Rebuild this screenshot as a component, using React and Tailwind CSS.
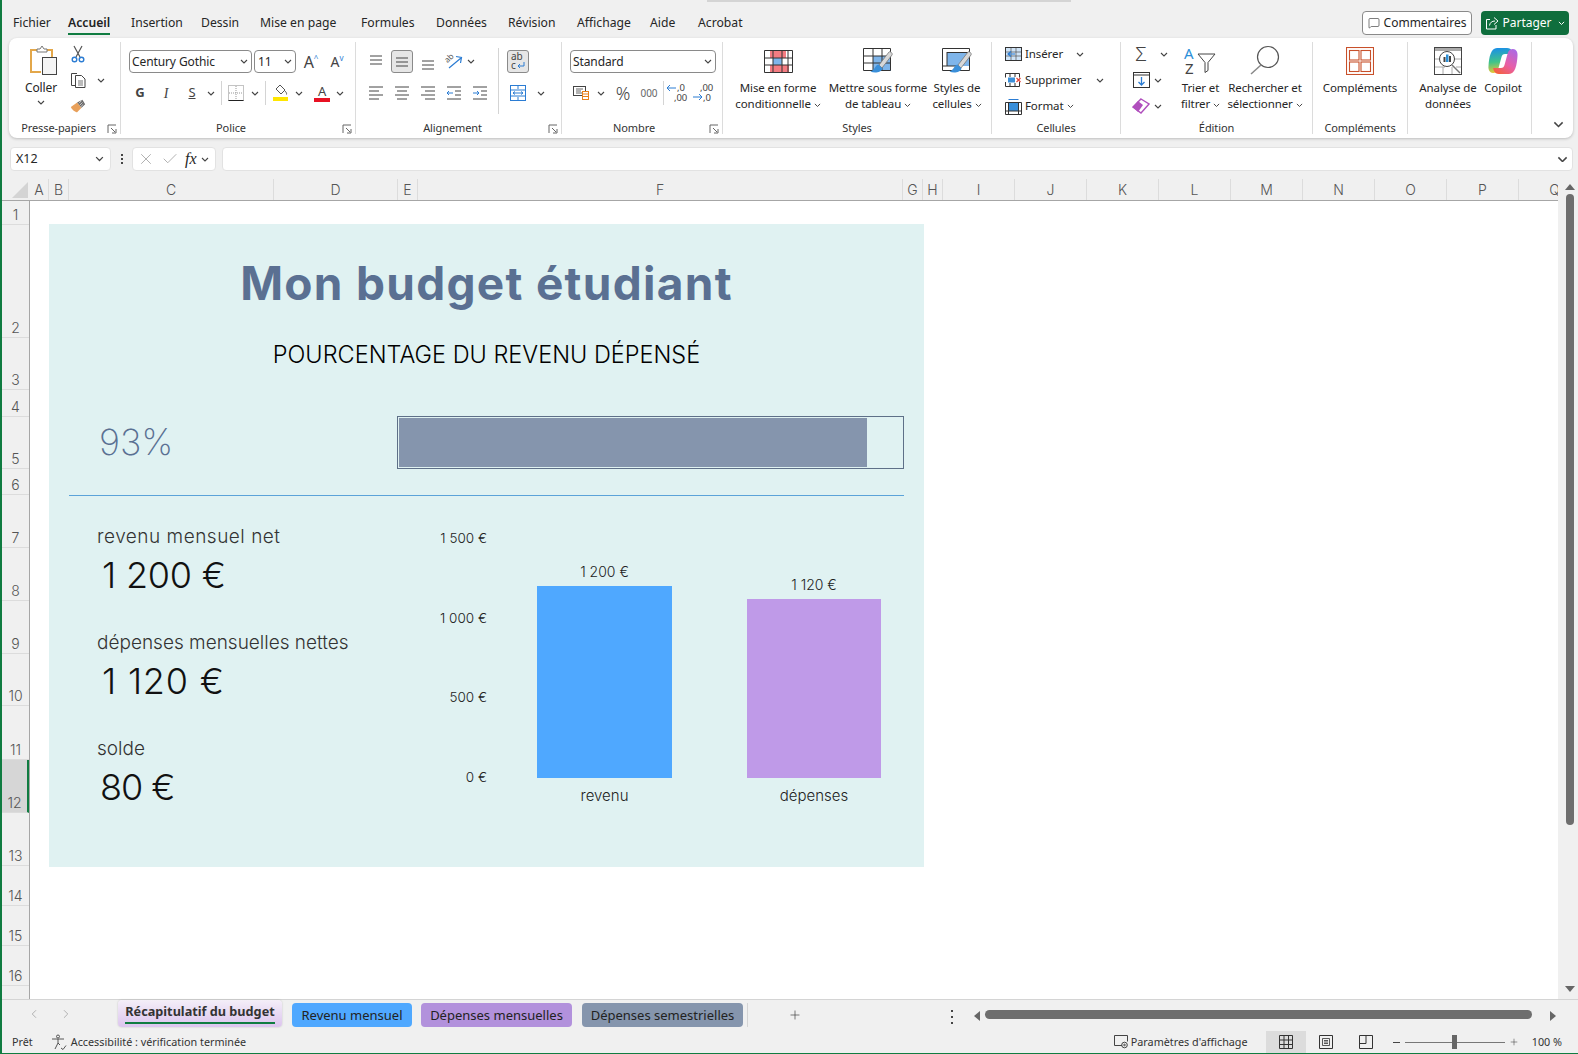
import React from 'react';
import { MessageSquare, Check, X, Plus, ChevronLeft, ChevronRight } from 'lucide-react';

const Chev = ({ className = '', s = 8, color = '#444' }) => (
    <svg width={s} height={s * 0.625} viewBox="0 0 8 5" className={`inline-block shrink-0 ${className}`}>
        <path d="M1 1l3 3 3-3" fill="none" stroke={color} strokeWidth="1.1" />
    </svg>
);

const Launcher = () => (
    <svg width="10" height="10" viewBox="0 0 10 10" className="absolute right-[3px] top-[82px]">
        <path d="M1 9V1h8M5 9h4V5M4 4l4 4" fill="none" stroke="#666" strokeWidth="1" />
    </svg>
);

const Cell = ({ w, children, className = '' }) => (
    <span className={`flex h-full shrink-0 items-center justify-center ${w} ${className}`}>{children}</span>
);

const Group = ({ w, label, labelClass = '', launcher, children, className = '' }) => (
    <div className={`relative my-[4px] flex shrink-0 flex-col border-r border-[#dcdcdc] ${w}`}>
        <div className={`h-[76px] shrink-0 ${className}`}>{children}</div>
        <div className={`h-[20px] shrink-0 text-center text-[11px] leading-[20px] text-[#333] ${labelClass}`}>{label}</div>
        {launcher && <Launcher />}
    </div>
);

// ---- ribbon drawings ----
const PasteIcon = () => (
    <svg width="30" height="31" viewBox="0 0 30 31" className="ml-[6px]">
        <path d="M8 5H2v22h10" fill="none" stroke="#e3a74a" strokeWidth="2" />
        <path d="M18 5h5v7" fill="none" stroke="#e3a74a" strokeWidth="2" />
        <path d="M8 6V4h3l2-3 2 3h3v3H8z" fill="#fff" stroke="#777" strokeWidth="1" />
        <rect x="13.5" y="12.5" width="14" height="17" fill="#f5f5f5" stroke="#444" />
    </svg>
);
const Scissors = () => (
    <svg width="14" height="18" viewBox="0 0 14 18">
        <path d="M3 1l6 11M11 1L5 12" stroke="#555" strokeWidth="1.2" fill="none" />
        <circle cx="3.5" cy="14.5" r="2.3" fill="none" stroke="#2b7cd3" strokeWidth="1.4" />
        <circle cx="10.5" cy="14.5" r="2.3" fill="none" stroke="#2b7cd3" strokeWidth="1.4" />
    </svg>
);
const CopyIcon = () => (
    <svg width="18" height="18" viewBox="0 0 18 18">
        <path d="M7 2.5H1.5v12H5" fill="none" stroke="#444" />
        <path d="M5.5 4.5h6l3.5 3.500V16.500h-9.500z" fill="#fff" stroke="#444" />
        <path d="M8 10h5M8 12h5M8 14h5" stroke="#777" />
    </svg>
);
const BrushIcon = () => (
    <svg width="18" height="16" viewBox="0 0 18 16">
        <path d="M1 9l7-5 5 6-5 5c-2 0-6-3-7-6z" fill="#e8a05a" />
        <path d="M8 4l5 6 4-4-3-5z" fill="#666" />
        <path d="M10 5l3-3M11 7l3-3M12 9l3-3" stroke="#fff" strokeWidth=".8" />
    </svg>
);
const BordersIcon = () => (
    <svg width="16" height="16" viewBox="0 0 16 16">
        <rect x=".5" y=".5" width="15" height="15" fill="none" stroke="#888" strokeDasharray="1 1" />
        <path d="M8 1v14M1 8h14" stroke="#999" strokeDasharray="1 1" />
        <path d="M.5 15.500h15" stroke="#222" />
    </svg>
);
const FillIcon = () => (
    <svg width="17" height="18" viewBox="0 0 17 18">
        <path d="M8 1l5 5-4 4-5-5z" fill="none" stroke="#555" />
        <path d="M13 7c1 1 2 2.500 1.500 3.500" fill="none" stroke="#555" />
        <rect x="1" y="13" width="15" height="4" fill="#ffe600" />
    </svg>
);
const Lines = ({ rows }) => (
    <svg width="16" height="16" viewBox="0 0 16 16">
        {rows.map(([x1, x2, y], i) => <path key={i} d={`M${x1} ${y}H${x2}`} stroke="#444" />)}
    </svg>
);
const OrientIcon = () => (
    <svg width="20" height="17" viewBox="0 0 20 17" className="overflow-visible">
        <text x="1" y="8" fontSize="8" fontFamily="Noto Sans" fill="#555" transform="rotate(-45 5 6)">ab</text>
        <path d="M5 15L17 5M12 3.500l5.500 1-1 5.500" stroke="#2b7cd3" strokeWidth="1.200" fill="none" />
    </svg>
);
const IndentIcon = ({ flip }) => (
    <svg width="16" height="14" viewBox="0 0 16 14">
        <path d="M1 1h14M9 5h6M9 9h6M1 13h14" stroke="#444" />
        <path d={flip ? 'M1 7h6M5 5l2 2-2 2' : 'M1 7h6M3 5L1 7l2 2'} stroke="#2b7cd3" fill="none" />
    </svg>
);
const MergeIcon = () => (
    <svg width="16" height="16" viewBox="0 0 16 16">
        <rect x=".5" y=".5" width="15" height="15" fill="#fff" stroke="#2b7cd3" />
        <path d="M1 5h14M1 11h14M8 1v3M8 12v3" stroke="#2b7cd3" />
        <path d="M3 8h10M5 6.500L3 8l2 1.500M11 6.500L13 8l-2 1.500" stroke="#2b7cd3" fill="none" />
    </svg>
);
const WrapIcon = () => (
    <svg width="20" height="21" viewBox="0 0 20 21" className="overflow-visible">
        <text x="3" y="9" fontSize="10" fontFamily="Noto Sans" fill="#444">ab</text>
        <text x="3" y="18" fontSize="10" fontFamily="Noto Sans" fill="#444">c</text>
        <path d="M16 11v4h-6M12 13l-2 2 2 2" fill="none" stroke="#2b7cd3" />
    </svg>
);
const DecimalIcon = ({ more }) => (
    <svg width="22" height="20" viewBox="0 0 22 20" className="overflow-visible">
        <text x={more ? 8 : 11} y="8" fontSize="9.500" fontFamily="Noto Sans" fill="#444">{more ? ',00' : ',0'}</text>
        <text x={more ? 11 : 8} y="18" fontSize="9.500" fontFamily="Noto Sans" fill="#444">{more ? ',0' : ',00'}</text>
        {more
            ? <path d="M1 14h9M7 11l3 3-3 3" fill="none" stroke="#2b7cd3" />
            : <path d="M10 5H1M4 2L1 5l3 3" fill="none" stroke="#2b7cd3" />}
    </svg>
);
const AccountingIcon = () => (
    <svg width="18" height="16" viewBox="0 0 18 16">
        <rect x=".5" y="1.500" width="12" height="9" fill="#fff" stroke="#444" />
        <path d="M3 4h7M3 6h5M3 8h6" stroke="#666" />
        <rect x="9.500" y="6.500" width="6" height="8" fill="#fff" stroke="#e8801a" />
        <path d="M10 9h5M10 11.500h5" stroke="#e8801a" />
    </svg>
);
const CfIcon = () => (
    <svg width="29" height="23" viewBox="0 0 29 23">
        <rect x="6" y="1" width="16" height="7" fill="#f47c82" />
        <rect x="9" y="8" width="9" height="7" fill="#7fb5ea" />
        <rect x="6" y="15" width="19" height="7" fill="#f47c82" />
        <path d="M.5.500h28v22H.5zM.5 8h28M.5 15h28M9 .5v22M18 .5v22M24 .5v22" fill="none" stroke="#333" />
    </svg>
);
const Brush = () => (
    <g>
        <path d="M16 17L26 4c1-1 4 1 3 3L19 20z" fill="#d8d8d8" stroke="#777" strokeWidth=".8" />
        <path d="M15.500 16.500c-4 1-3 5-8 7 4 2 11 1 12-3z" fill="#3a8fd9" />
    </g>
);
const TableIcon = () => (
    <svg width="30" height="25" viewBox="0 0 30 25">
        <rect x="10" y="8" width="18" height="15" fill="#7fb5ea" />
        <path d="M.5.500h27v22H.5zM.5 8h27M.5 15h27M10 .5v22M19 .5v22" fill="none" stroke="#333" />
        <Brush />
    </svg>
);
const StylesIcon = () => (
    <svg width="30" height="25" viewBox="0 0 30 25">
        <rect x="5" y="4" width="23" height="14" fill="#7fb5ea" />
        <path d="M.5.500h27v22H.5zM5 4.500h23M.5 18h15M5 4v14" fill="none" stroke="#333" />
        <Brush />
    </svg>
);
const InsertIcon = () => (
    <svg width="17" height="14" viewBox="0 0 17 14">
        <rect x=".5" y=".5" width="16" height="13" fill="#cfe4f7" stroke="#333" />
        <path d="M1 5h15M1 9h15M6 1v12M11 1v12" stroke="#555" strokeWidth=".7" />
        <path d="M10 7H3M6 4.500L3 7l3 2.500" stroke="#2b7cd3" fill="none" strokeWidth="1.200" />
    </svg>
);
const DeleteIcon = () => (
    <svg width="17" height="14" viewBox="0 0 17 14">
        <path d="M.5.500h14M.5 13.500h14M.5.500v4M14.500.500v4M.5 9v4.500M14.500 9v4.500M5 1v3M10 1v3M5 10v3M10 10v3" fill="none" stroke="#333" />
        <rect x="3" y="4.500" width="7" height="5" fill="#3a8fd9" />
        <path d="M11.500 5l4 4M15.500 5l-4 4" stroke="#e0453a" strokeWidth="1.200" />
    </svg>
);
const FormatIcon = () => (
    <svg width="17" height="17" viewBox="0 0 17 17">
        <rect x="3" y="4" width="11" height="9" fill="#3a8fd9" />
        <path d="M.5 4.500h16v12H.5zM.5 13h16M3.500 4v12.500M13.500 4v12.500" fill="none" stroke="#333" />
        <path d="M3.500 1.500h10" stroke="#2b7cd3" />
    </svg>
);
const FillDown = () => (
    <svg width="17" height="16" viewBox="0 0 17 16">
        <rect x=".5" y=".5" width="16" height="15" fill="#fff" stroke="#333" />
        <path d="M1 3h15" stroke="#333" />
        <path d="M8.500 5v8M5.500 10l3 3 3-3" stroke="#2b7cd3" strokeWidth="1.300" fill="none" />
    </svg>
);
const Eraser = () => (
    <svg width="18" height="16" viewBox="0 0 18 16">
        <path d="M9 1l8 5-8 9-8-6z" fill="#fff" stroke="#b04fbd" strokeWidth="1.400" />
        <path d="M1 9l5-6 5 4-5 7z" fill="#b04fbd" />
    </svg>
);
const SortIcon = () => (
    <svg width="33" height="29" viewBox="0 0 33 29" className="overflow-visible">
        <text x="0" y="13" fontSize="15" fontFamily="Noto Sans" fill="#2b8fd8">A</text>
        <text x="1" y="28" fontSize="15" fontFamily="Noto Sans" fill="#444">Z</text>
        <path d="M14 8h17l-7 8.500v8l-3 2v-10z" fill="none" stroke="#444" />
    </svg>
);
const FindIcon = () => (
    <svg width="30" height="30" viewBox="0 0 30 30">
        <circle cx="18" cy="12" r="10.500" fill="none" stroke="#555" strokeWidth="1.200" />
        <path d="M11 20L1 29" stroke="#888" strokeWidth="1.500" />
    </svg>
);
const AddinsIcon = () => (
    <svg width="28" height="28" viewBox="0 0 28 28" fill="none" stroke="#c8502a" strokeWidth="1.100">
        <rect x=".5" y=".5" width="27" height="27" />
        <rect x="3.500" y="3.500" width="9.500" height="9.500" />
        <rect x="15" y="3.500" width="9.500" height="9.500" />
        <rect x="3.500" y="15" width="9.500" height="9.500" />
        <rect x="15" y="15" width="9.500" height="9.500" />
    </svg>
);
const AnalyzeIcon = () => (
    <svg width="28" height="28" viewBox="0 0 28 28">
        <rect x=".5" y=".5" width="27" height="27" fill="#fff" stroke="#444" />
        <rect x="1" y="1" width="26" height="3" fill="#aaa" />
        <path d="M1 12h6M1 20h10M9 20v7M18 20v7M20 12h7M22 20h5" stroke="#aaa" />
        <circle cx="13" cy="12" r="7.500" fill="#fff" stroke="#444" />
        <rect x="9.500" y="10" width="2" height="5" fill="#444" />
        <rect x="12" y="7.500" width="2.500" height="7.500" fill="#2b8fd8" />
        <rect x="15" y="9" width="2" height="6" fill="#444" />
        <path d="M18 18l8 8" stroke="#777" strokeWidth="1.500" />
    </svg>
);
const CopilotIcon = () => (
    <svg width="30" height="28" viewBox="0 0 30 28">
        <defs>
            <linearGradient id="cpa" x1="0.3" y1="0" x2="0.4" y2="1">
                <stop offset="0" stopColor="#1a8fe8" />
                <stop offset="0.55" stopColor="#3fc48a" />
                <stop offset="1" stopColor="#f2c531" />
            </linearGradient>
            <linearGradient id="cpb" x1="0.1" y1="1" x2="0.8" y2="0">
                <stop offset="0" stopColor="#a86be8" />
                <stop offset="0.55" stopColor="#e85fa8" />
                <stop offset="1" stopColor="#f5603c" />
            </linearGradient>
        </defs>
        <path id="cpshape" d="M9 1h10c2.500 0 4 1 5 3l1 3h-8c-2 0-3 1-3.500 3l-3 11c-.5 2-2 5-5 5H5c-3 0-5-3-4.500-7C1 10 3 1 9 1z" fill="url(#cpa)" />
        <path d="M9 1h10c2.500 0 4 1 5 3l1 3h-8c-2 0-3 1-3.500 3l-3 11c-.5 2-2 5-5 5H5c-3 0-5-3-4.500-7C1 10 3 1 9 1z" fill="url(#cpb)" transform="rotate(180 15 14)" />
    </svg>
);
const ShareIcon = () => (
    <svg width="14" height="14" viewBox="0 0 14 14" fill="none" stroke="#fff" strokeWidth="1">
        <path d="M5 3.500H1.500v9.500h9.500V9" />
        <path d="M4.500 9.500C5 6.500 7 5 10 5M9 1.500L13 5 9 8.500" />
    </svg>
);
const GridView = () => (
    <svg width="14" height="14" viewBox="0 0 14 14" fill="none" stroke="#333">
        <path d="M.5.500h13v13H.5zM5 .5v13M9.500.5v13M.5 5h13M.5 9.500h13" />
    </svg>
);
const PageView = () => (
    <svg width="14" height="14" viewBox="0 0 14 14" fill="none" stroke="#333">
        <path d="M.5.500h13v13H.5z" />
        <path d="M3.500 3.500h7v7h-7zM5 5.500h4M5 7h4M5 8.500h4" strokeWidth=".8" />
    </svg>
);
const BreakView = () => (
    <svg width="14" height="14" viewBox="0 0 14 14" fill="none" stroke="#333">
        <path d="M.5.500h13v13H.5zM.5 8.500h6.500V.5" />
    </svg>
);

const tabs = [
    ['Fichier', 'w-[55px]'], ['Accueil', 'w-[63px]'], ['Insertion', 'w-[70px]'], ['Dessin', 'w-[59px]'], ['Mise en page', 'w-[101px]'],
    ['Formules', 'w-[75px]'], ['Données', 'w-[72px]'], ['Révision', 'w-[69px]'], ['Affichage', 'w-[73px]'], ['Aide', 'w-[48px]'], ['Acrobat', 'w-[60px]'],
];

const columns = [
    ['A', 'w-[19px]'], ['B', 'w-[20px]'], ['C', 'w-[205px]'], ['D', 'w-[124px]'], ['E', 'w-[20px]'], ['F', 'w-[485px]'],
    ['G', 'w-[20px]'], ['H', 'w-[20px]'], ['I', 'w-[72px]'], ['J', 'w-[72px]'], ['K', 'w-[72px]'], ['L', 'w-[72px]'],
    ['M', 'w-[72px]'], ['N', 'w-[72px]'], ['O', 'w-[72px]'], ['P', 'w-[72px]'], ['Q', 'w-[72px]'],
];

const rows = [
    ['1', 'h-[24px]'], ['2', 'h-[113px]'], ['3', 'h-[52px]'], ['4', 'h-[27px]'], ['5', 'h-[52px]'], ['6', 'h-[26px]'],
    ['7', 'h-[53px]'], ['8', 'h-[53px]'], ['9', 'h-[53px]'], ['10', 'h-[52px]'], ['11', 'h-[54px]'], ['12', 'h-[53px]'],
    ['13', 'h-[53px]'], ['14', 'h-[40px]'], ['15', 'h-[40px]'], ['16', 'h-[40px]'],
];

const Ribbon = () => (
    <div className="ml-[7px] flex h-[100px] w-[1564px] rounded-lg bg-white text-[11.500px] tracking-[-0.1px] shadow-[0_1px_3px_rgba(0,0,0,0.22)]">
        <Group w="w-[112px]" label="Presse-papiers" labelClass="pr-[12px]" launcher className="flex">
            <div className="ml-[3px] flex w-[58px] flex-col items-center pt-[3px]">
                <PasteIcon />
                <span className="mt-[3px] text-[12px] leading-[18px]">Coller</span>
                <Chev className="mt-[3px]" />
            </div>
            <div className="flex flex-col gap-[2px]">
                <div className="flex h-[24px] items-center"><Cell w="w-[16px]"><Scissors /></Cell></div>
                <div className="flex h-[24px] items-center"><Cell w="w-[18px]"><CopyIcon /></Cell><Chev className="ml-[9px]" /></div>
                <div className="flex h-[24px] items-center"><Cell w="w-[16px]"><BrushIcon /></Cell></div>
            </div>
        </Group>

        <Group w="w-[235px]" label="Police" labelClass="pr-[14px]" launcher className="flex flex-col gap-[8px] pt-[8px]">
            <div className="flex h-[23px] items-center pl-[8px]">
                <div className="flex h-[23px] w-[123px] items-center justify-between rounded-[4px] border border-[#8a8a8a] pl-[2px] pr-[3px] text-[12px]">
                    Century Gothic<Chev />
                </div>
                <div className="ml-[2px] flex h-[23px] w-[42px] items-center justify-between rounded-[4px] border border-[#8a8a8a] pl-[3px] pr-[3px] text-[12px]">
                    11<Chev />
                </div>
                <Cell w="w-[24px] ml-[3px]" className="text-[16px] text-[#444]">A<sup className="text-[8px] text-[#2b7cd3]">^</sup></Cell>
                <Cell w="w-[28px]" className="text-[14px] text-[#444]">A<sup className="text-[8px] text-[#2b7cd3]">v</sup></Cell>
            </div>
            <div className="flex h-[24px] items-center pl-[6px]">
                <Cell w="w-[26px]" className="text-[13px] font-bold text-[#444]">G</Cell>
                <Cell w="w-[26px]" className="[font-family:'Liberation_Serif',serif] text-[14px] italic text-[#444]">I</Cell>
                <Cell w="w-[26px]" className="text-[13px] text-[#444] underline">S</Cell>
                <Cell w="w-[12px]"><Chev /></Cell>
                <Cell w="w-[5px]" className="border-r border-[#d4d4d4]" />
                <Cell w="w-[28px]"><BordersIcon /></Cell>
                <Cell w="w-[10px]"><Chev /></Cell>
                <Cell w="w-[6px]" className="border-r border-[#d4d4d4]" />
                <Cell w="w-[28px]"><FillIcon /></Cell>
                <Cell w="w-[10px]"><Chev /></Cell>
                <Cell w="w-[28px] ml-[4px]">
                    <span className="flex flex-col items-center text-[13px] leading-[14px] text-[#444]">A<span className="h-[4px] w-[16px] bg-[#e81123]" /></span>
                </Cell>
                <Cell w="w-[8px]"><Chev /></Cell>
            </div>
        </Group>

        <Group w="w-[206px]" label="Alignement" labelClass="pr-[12px]" launcher className="flex">
            <div className="ml-[7px] mt-[6px] flex h-[66px] w-[136px] flex-col gap-[8px] border-r border-[#d4d4d4] pt-[2px]">
                <div className="flex h-[23px] items-center">
                    <Cell w="w-[26px]"><Lines rows={[[2, 14, 2], [2, 14, 6], [2, 14, 10]]} /></Cell>
                    <Cell w="w-[26px]">
                        <span className="flex h-[23px] w-[22px] items-center justify-center rounded-[3px] border border-[#8a8a8a] bg-[#e6e6e6]">
                            <Lines rows={[[2, 14, 4], [2, 14, 8], [2, 14, 12]]} />
                        </span>
                    </Cell>
                    <Cell w="w-[26px]"><Lines rows={[[2, 14, 7], [2, 14, 11], [2, 14, 15]]} /></Cell>
                    <Cell w="w-[26px]"><OrientIcon /></Cell>
                    <Cell w="w-[8px]"><Chev /></Cell>
                </div>
                <div className="flex h-[24px] items-center">
                    <Cell w="w-[26px]"><Lines rows={[[1, 15, 2], [1, 11, 6], [1, 15, 10], [1, 11, 14]]} /></Cell>
                    <Cell w="w-[26px]"><Lines rows={[[1, 15, 2], [3, 13, 6], [1, 15, 10], [3, 13, 14]]} /></Cell>
                    <Cell w="w-[26px]"><Lines rows={[[1, 15, 2], [5, 15, 6], [1, 15, 10], [5, 15, 14]]} /></Cell>
                    <Cell w="w-[26px]"><IndentIcon /></Cell>
                    <Cell w="w-[26px]"><IndentIcon flip /></Cell>
                </div>
            </div>
            <div className="ml-[6px] flex flex-col gap-[8px] pt-[8px]">
                <div className="flex h-[23px] w-[26px] items-center justify-center">
                    <span className="flex h-[23px] w-[22px] items-center justify-center rounded-[3px] border border-[#8a8a8a] bg-[#e6e6e6]">
                        <WrapIcon />
                    </span>
                </div>
                <div className="flex h-[24px] items-center">
                    <Cell w="w-[26px]"><MergeIcon /></Cell>
                    <Cell w="w-[20px]"><Chev /></Cell>
                </div>
            </div>
        </Group>

        <Group w="w-[161px]" label="Nombre" labelClass="pr-[16px]" launcher className="flex flex-col gap-[8px] pt-[8px]">
            <div className="ml-[8px] flex h-[23px] w-[146px] items-center justify-between rounded-[4px] border border-[#8a8a8a] pl-[2px] pr-[3px] text-[12px]">
                Standard<Chev />
            </div>
            <div className="flex h-[24px] items-center pl-[7px]">
                <Cell w="w-[26px]"><AccountingIcon /></Cell>
                <Cell w="w-[12px]"><Chev /></Cell>
                <Cell w="w-[26px] ml-[3px]" className="text-[18px] font-light text-[#444]">%</Cell>
                <Cell w="w-[26px]" className="text-[10px] text-[#666]">000</Cell>
                <Cell w="w-[2px]" className="border-r border-[#d4d4d4]" />
                <Cell w="w-[26px]"><DecimalIcon /></Cell>
                <Cell w="w-[26px]"><DecimalIcon more /></Cell>
            </div>
        </Group>

        <Group w="w-[269px]" label="Styles" className="flex pl-[5px] text-center leading-[16px]">
            <div className="flex w-[100px] flex-col items-center pt-[8px]">
                <CfIcon />
                <span className="mt-[7px]">Mise en forme</span>
                <span className="whitespace-nowrap">conditionnelle <Chev s={7} /></span>
            </div>
            <div className="flex w-[100px] flex-col items-center pt-[6px]">
                <TableIcon />
                <span className="mt-[7px] whitespace-nowrap">Mettre sous forme</span>
                <span className="whitespace-nowrap">de tableau <Chev s={7} /></span>
            </div>
            <div className="flex w-[58px] flex-col items-center pt-[6px]">
                <StylesIcon />
                <span className="mt-[7px] whitespace-nowrap">Styles de</span>
                <span className="whitespace-nowrap">cellules <Chev s={7} /></span>
            </div>
        </Group>

        <Group w="w-[129px]" label="Cellules" className="flex flex-col gap-[2px] pl-[13px]">
            <div className="flex h-[24px] items-center"><Cell w="w-[17px]"><InsertIcon /></Cell><span className="ml-[3px] w-[51px]">Insérer</span><Chev /></div>
            <div className="flex h-[24px] items-center"><Cell w="w-[17px]"><DeleteIcon /></Cell><span className="ml-[3px] w-[71px]">Supprimer</span><Chev /></div>
            <div className="flex h-[24px] items-center"><Cell w="w-[17px]"><FormatIcon /></Cell><span className="ml-[3px]">Format</span><Chev className="ml-[4px]" s={7} /></div>
        </Group>

        <Group w="w-[192px]" label="Édition" className="flex text-center leading-[16px]">
            <div className="flex w-[53px] flex-col gap-[2px] pl-[11px]">
                <div className="flex h-[24px] items-center"><Cell w="w-[18px]" className="text-[20px] font-light text-[#444]">Σ</Cell><Chev className="ml-[10px]" /></div>
                <div className="flex h-[24px] items-center"><Cell w="w-[18px]"><FillDown /></Cell><Chev className="ml-[4px]" /></div>
                <div className="flex h-[24px] items-center"><Cell w="w-[18px]"><Eraser /></Cell><Chev className="ml-[4px]" /></div>
            </div>
            <div className="flex w-[53px] flex-col items-center pt-[4px]">
                <SortIcon />
                <span className="mt-[5px]">Trier et</span>
                <span className="whitespace-nowrap">filtrer <Chev s={7} /></span>
            </div>
            <div className="flex w-[76px] flex-col items-center pt-[3px]">
                <FindIcon />
                <span className="mt-[5px] whitespace-nowrap">Rechercher et</span>
                <span className="whitespace-nowrap">sélectionner <Chev s={7} /></span>
            </div>
        </Group>

        <Group w="w-[95px]" label="Compléments" className="flex flex-col items-center pt-[5px] leading-[16px]">
            <AddinsIcon />
            <span className="mt-[5px]">Compléments</span>
        </Group>

        <Group w="w-[124px]" label="" className="flex pl-[5px] text-center leading-[16px]">
            <div className="flex w-[70px] flex-col items-center pt-[5px]">
                <AnalyzeIcon />
                <span className="mt-[5px] whitespace-nowrap">Analyse de</span>
                <span>données</span>
            </div>
            <div className="flex w-[40px] flex-col items-center pt-[5px]">
                <CopilotIcon />
                <span className="mt-[5px]">Copilot</span>
            </div>
        </Group>

        <div className="flex flex-1 items-end pb-[10px] pl-[21px]"><Chev s={11} /></div>
    </div>
);

const Stat = ({ label, value, labelClass = '', valueClass }) => (
    <div className="h-[76px]">
        <div className={`whitespace-nowrap text-[19px] font-light leading-[24px] text-[#333] ${labelClass}`}>{label}</div>
        <div className={`whitespace-nowrap text-[36px] font-light leading-[52px] text-[#111] ${valueClass}`}>{value}</div>
    </div>
);

const Budget = () => (
    <div className="ml-[19px] mt-[23px] h-[643px] w-[875px] bg-[#e0f2f2] [font-family:Inter,sans-serif]">
        <div className="pt-[29px] text-center text-[46px] font-bold leading-[60px] tracking-[1.3px] text-[#5a7092]">Mon budget étudiant</div>
        <div className="mt-[27px] text-center text-[23.500px] font-light leading-[30px] text-black">POURCENTAGE DU REVENU DÉPENSÉ</div>
        <div className="mt-[46px] flex h-[53px] items-center">
            <div className="ml-[50px] w-[298px] text-[36px] font-extralight leading-[53px] text-[#5a7092]">93%</div>
            <div className="h-[53px] w-[507px] border border-[#5e7088] p-[1px]">
                <div className="h-full w-[93%] bg-[#8595ad]" />
            </div>
        </div>
        <div className="mx-[20px] mt-[26px] h-px bg-[#5ba3d9]" />
        <div className="flex">
            <div className="w-[376px] pl-[48px] pt-[29px]">
                <div className="flex flex-col gap-[30px]">
                    <Stat label="revenu mensuel net" labelClass="tracking-[0.5px]" value="1 200 €" valueClass="pl-[5px] tracking-[-0.2px]" />
                    <Stat label="dépenses mensuelles nettes" value="1 120 €" valueClass="pl-[5px] tracking-[0.8px]" />
                    <Stat label="solde" value="80 €" valueClass="pl-[3px] tracking-[-1px]" />
                </div>
            </div>
            <div className="mt-[33px] flex h-[257px] w-[62px] flex-col items-end justify-between text-[13.500px] font-light leading-[18px] text-[#222]">
                <span>1 500 €</span>
                <span>1 000 €</span>
                <span>500 €</span>
                <span>0 €</span>
            </div>
            <div className="mt-[33px] flex h-[276px] text-[14px] font-light leading-[18px] text-[#222]">
                <div className="ml-[50px] flex w-[135px] flex-col items-center justify-end">
                    <span>1 200 €</span>
                    <div className="mt-[5px] h-[192px] w-full bg-[#4fa8ff]" />
                    <span className="mt-[9px] text-[15px]">revenu</span>
                </div>
                <div className="ml-[75px] flex w-[134px] flex-col items-center justify-end">
                    <span>1 120 €</span>
                    <div className="mt-[5px] h-[179px] w-full bg-[#bf9ae8]" />
                    <span className="mt-[9px] text-[15px]">dépenses</span>
                </div>
            </div>
        </div>
    </div>
);

const SheetTabs = () => (
    <div className="flex h-[32px] items-start border-t border-[#d4d4d4] text-[13px] leading-[24px] text-[#222]">
        <div className="flex h-[28px] w-[116px] items-center pl-[25px] text-[#a8a8a8]">
            <ChevronLeft size={14} strokeWidth={1.5} />
            <ChevronRight size={14} strokeWidth={1.5} className="ml-[18px]" />
        </div>
        <div className="flex h-[27px] w-[164px] flex-col items-center rounded-[4px] bg-gradient-to-b from-[#f4eef8] to-[#dcc5ee] pt-[1px] font-bold text-[#333] shadow-[0_0_2px_rgba(0,0,0,0.2)]">
            <span className="text-[12.700px] leading-[21px]">Récapitulatif du budget</span>
            <span className="h-[2px] w-[150px] bg-[#107c41]" />
        </div>
        <div className="ml-[10px] mt-[3px] h-[24px] w-[120px] rounded-[4px] bg-[#4fa8ff] text-center">Revenu mensuel</div>
        <div className="ml-[9px] mt-[3px] h-[24px] w-[151px] rounded-[4px] bg-[#b291dc] text-center">Dépenses mensuelles</div>
        <div className="ml-[10px] mt-[3px] h-[24px] w-[161px] rounded-[4px] bg-[#8595ad] text-center">Dépenses semestrielles</div>
        <div className="ml-[4px] mt-[3px] h-[24px] w-px bg-[#d4d4d4]" />
        <Plus size={14} strokeWidth={1.2} className="ml-[40px] mt-[8px] text-[#444]" />
        <div className="ml-[149px] mt-[10px] flex h-[14px] flex-col justify-between">
            <span className="h-[2px] w-[2px] bg-[#444]" />
            <span className="h-[2px] w-[2px] bg-[#444]" />
            <span className="h-[2px] w-[2px] bg-[#444]" />
        </div>
        <svg width="6" height="10" viewBox="0 0 6 10" className="ml-[21px] mt-[11px]"><path d="M6 0v10L0 5z" fill="#666" /></svg>
        <div className="ml-[5px] mt-[10px] h-[9px] w-[547px] rounded-full bg-[#6e6e6e]" />
        <svg width="6" height="10" viewBox="0 0 6 10" className="ml-[18px] mt-[11px]"><path d="M0 0v10l6-5z" fill="#666" /></svg>
    </div>
);

const StatusBar = () => (
    <div className="flex h-[22px] items-center text-[10.800px] text-[#333]">
        <span className="ml-[10px]">Prêt</span>
        <svg width="16" height="16" viewBox="0 0 16 16" className="ml-[18px]" fill="none" stroke="#444" strokeWidth=".9">
            <circle cx="7" cy="2.500" r="1.500" />
            <path d="M1 5h12M7 5v4M7 9l-3 6M7 9l2 2M10 14l2 1.500 3-4" />
        </svg>
        <span className="ml-[4px] w-[176px] whitespace-nowrap">Accessibilité : vérification terminée</span>
        <svg width="15" height="14" viewBox="0 0 15 14" className="ml-[867px]" fill="none" stroke="#444">
            <path d="M8 10.500H.5V.5h13v6" />
            <circle cx="10.500" cy="10" r="2.800" />
            <circle cx="10.500" cy="10" r=".8" />
        </svg>
        <span className="ml-[2px] w-[120px] whitespace-nowrap">Paramètres d'affichage</span>
        <div className="ml-[15px] flex h-full w-[40px] items-center justify-center bg-[#dcdcdc]"><GridView /></div>
        <div className="flex w-[40px] justify-center"><PageView /></div>
        <div className="flex w-[40px] justify-center"><BreakView /></div>
        <span className="ml-[7px] h-px w-[7px] bg-[#444]" />
        <div className="ml-[5px] flex h-[1px] w-[100px] items-center justify-center bg-[#777]">
            <span className="h-[14px] w-[5px] bg-[#666]" />
        </div>
        <Plus size={10} strokeWidth={1.2} className="ml-[4px]" />
        <span className="ml-[13px]">100 %</span>
    </div>
);

export default function App() {
    return (
        <div className="flex h-[1054px] w-[1578px] flex-col overflow-hidden border-b border-l-2 border-[#107c41] bg-[#f0f0f0] text-[#262626] [font-family:'Noto_Sans',sans-serif]">
            {/* Menu tabs */}
            <div className="relative flex h-[38px] shrink-0 items-start justify-between">
                <span className="absolute left-[705px] top-0 h-[2px] w-[364px] bg-[#d4d4d4]" />
                <div className="flex pl-[11px] pt-[13px] text-[12.200px] leading-[20px]">
                    {tabs.map(([t, w]) => (
                        <div key={t} className={`relative shrink-0 ${w}`}>
                            <span className={`relative inline-block ${t === 'Accueil' ? 'font-semibold text-[#222]' : ''}`}>
                                {t}
                                {t === 'Accueil' && <span className="absolute left-0 right-0 top-[20px] h-[2px] bg-[#107c41]" />}
                            </span>
                        </div>
                    ))}
                </div>
                <div className="mr-[9px] mt-[11px] flex items-center text-[12px]">
                    <div className="flex h-[24px] w-[110px] items-center justify-center gap-[4px] rounded-[4px] border border-[#8a8a8a] bg-white">
                        <MessageSquare size={12} strokeWidth={1.2} />Commentaires
                    </div>
                    <div className="ml-[9px] flex h-[24px] w-[88px] items-center justify-center gap-[3px] rounded-[4px] bg-[#0f6e3d] text-white">
                        <ShareIcon />Partager<Chev className="ml-[3px]" s={7} color="#fff" />
                    </div>
                </div>
            </div>

            <Ribbon />

            {/* Formula bar */}
            <div className="ml-[8px] mt-[9px] flex h-[24px] shrink-0 items-center text-[12.500px]">
                <div className="flex h-[24px] w-[101px] items-center justify-between rounded-[4px] border border-[#e2e2e2] bg-white pl-[5px] pr-[6px]">
                    X12<Chev s={9} />
                </div>
                <div className="flex w-[21px] flex-col items-center gap-[2px]">
                    <span className="h-[2px] w-[2px] bg-[#444]" />
                    <span className="h-[2px] w-[2px] bg-[#444]" />
                    <span className="h-[2px] w-[2px] bg-[#444]" />
                </div>
                <div className="flex h-[24px] w-[84px] items-center rounded-[4px] border border-[#e2e2e2] bg-white pl-[4px]">
                    <X size={18} strokeWidth={1.2} className="text-[#a8a8a8]" />
                    <Check size={18} strokeWidth={1.2} className="ml-[6px] text-[#a8a8a8]" />
                    <span className="ml-[6px] [font-family:'Liberation_Serif',serif] text-[16px] italic">fx</span>
                    <Chev className="ml-[4px]" />
                </div>
                <div className="ml-[6px] flex h-[24px] w-[1351px] items-center justify-end rounded-[4px] border border-[#e2e2e2] bg-white pr-[4px]">
                    <Chev s={11} />
                </div>
            </div>

            {/* Grid */}
            <div className="flex min-h-0 flex-1">
                <div className="flex w-[1556px] flex-col">
                    <div className="flex h-[30px] shrink-0 overflow-hidden border-b border-[#a6a6a6] text-[14px] font-light leading-[22px] text-[#555] [font-family:Inter,sans-serif]">
                        <div className="flex w-[28px] shrink-0 items-end justify-end pb-[2px] pr-[2px]">
                            <svg width="16" height="16" viewBox="0 0 16 16"><path d="M16 0v16H0z" fill="#d4d4d4" /></svg>
                        </div>
                        {columns.map(([c, w]) => (
                            <div key={c} className={`mt-[8px] shrink-0 border-r border-[#dcdcdc] text-center ${w}`}>{c}</div>
                        ))}
                    </div>
                    <div className="flex min-h-0 flex-1">
                        <div className="w-[28px] shrink-0 border-r border-[#a6a6a6] text-center text-[14px] font-light leading-[18px] text-[#555] [font-family:Inter,sans-serif]">
                            {rows.map(([r, h]) => (
                                <div key={r} className={`flex items-end justify-center border-b ${h} ${r === '12' ? 'border-r-2 border-b-[#dcdcdc] border-r-[#107c41] bg-[#d6d6d6]' : 'border-[#dcdcdc]'}`}>{r}</div>
                            ))}
                        </div>
                        <div className="flex-1 bg-white">
                            <Budget />
                        </div>
                    </div>
                </div>
                <div className="flex w-[20px] flex-col items-center bg-[#f0f0f0] pl-[4px]">
                    <svg width="10" height="6" viewBox="0 0 10 6" className="mt-[13px]"><path d="M0 6h10L5 0z" fill="#666" /></svg>
                    <div className="mt-[4px] h-[631px] w-[8px] rounded-full bg-[#6e6e6e]" />
                    <svg width="10" height="6" viewBox="0 0 10 6" className="mt-[161px]"><path d="M0 0h10L5 6z" fill="#666" /></svg>
                </div>
            </div>

            <SheetTabs />
            <StatusBar />
        </div>
    );
}
